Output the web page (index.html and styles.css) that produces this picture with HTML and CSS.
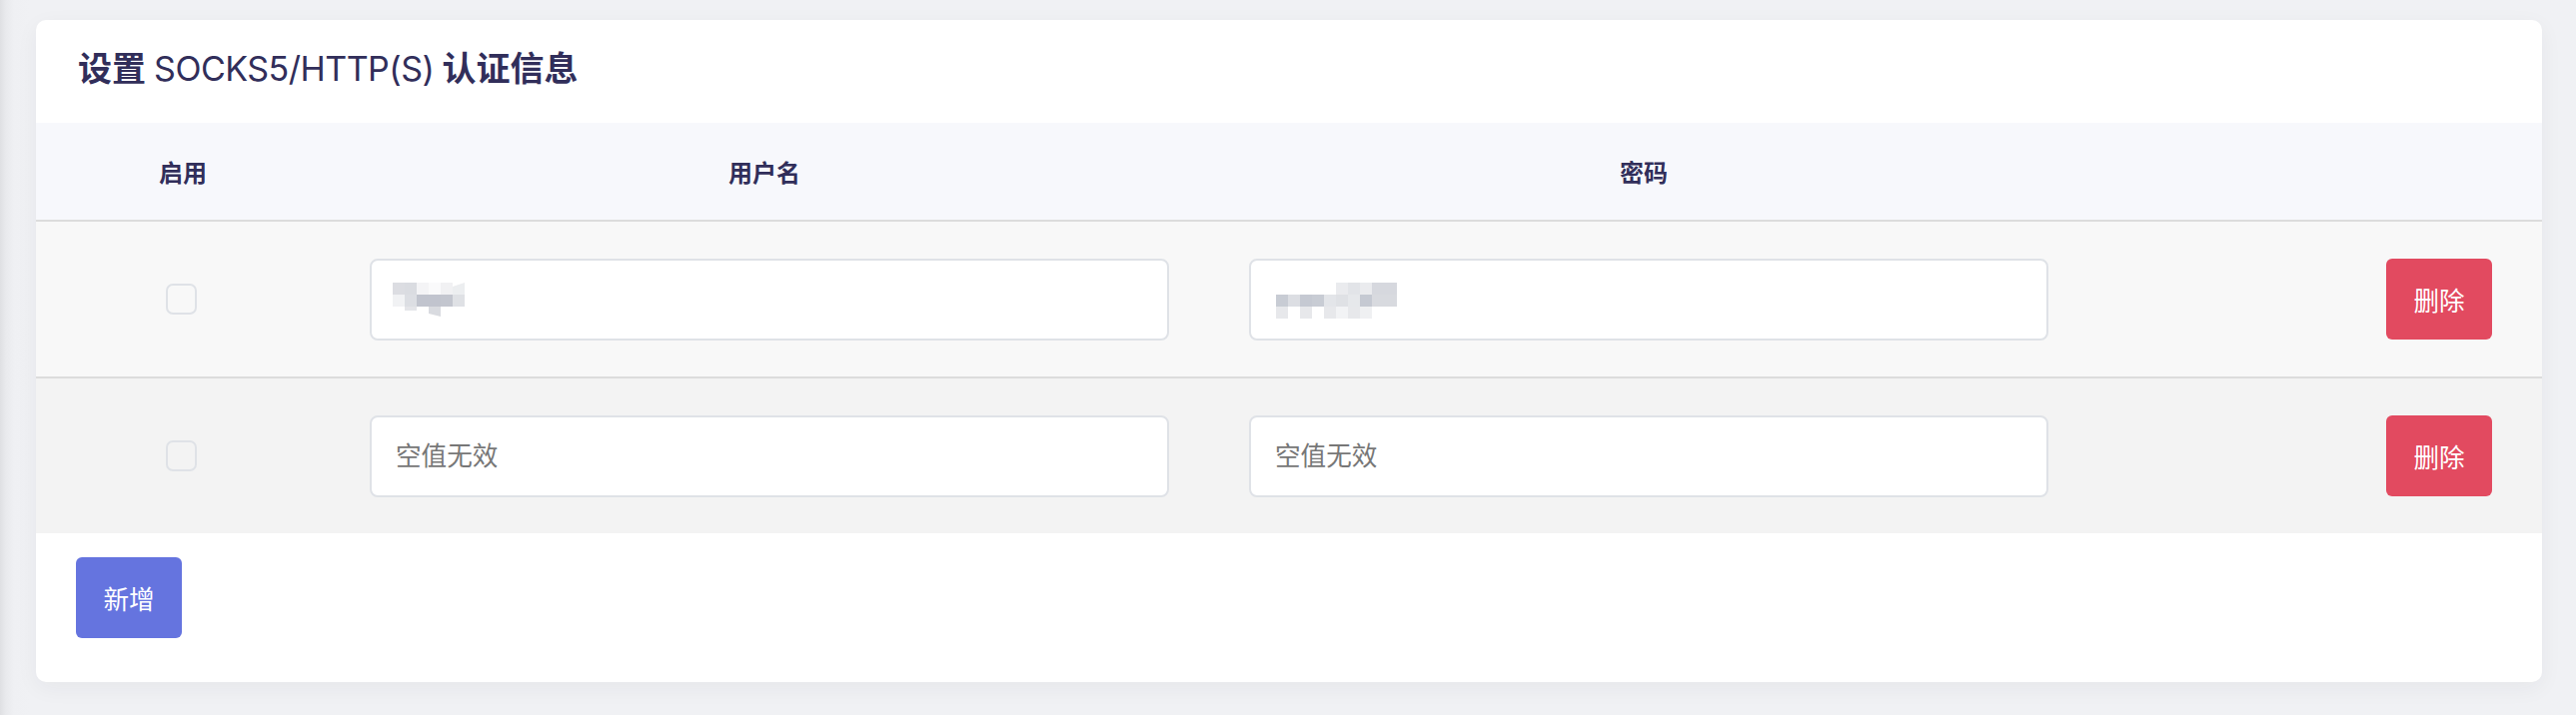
FILE: index.html
```html
<!DOCTYPE html>
<html lang="zh-CN">
<head>
<meta charset="utf-8">
<title>设置 SOCKS5/HTTP(S) 认证信息</title>
<link rel="stylesheet" href="styles.css">
</head>
<body>
<div class="page">
  <section class="card">
    <h2 class="card-title">设置 <span class="latin">SOCKS5/HTTP(S)</span> 认证信息</h2>
    <div class="table">
      <div class="row head">
        <div class="cell">启用</div>
        <div class="cell">用户名</div>
        <div class="cell">密码</div>
        <div class="cell"></div>
      </div>
      <div class="row body odd">
        <div class="cell"><input type="checkbox" class="check"></div>
        <div class="cell field-cell">
          <div class="field">
            <input type="text" class="text-input" aria-label="用户名">
            <svg class="mosaic mosaic-user" width="72" height="36" viewBox="0 0 72 36" aria-hidden="true">
              <rect x="0" y="0" width="12" height="12" fill="#dcdde2"/>
              <rect x="12" y="0" width="12" height="12" fill="#dadce1"/>
              <rect x="24" y="0" width="12" height="12" fill="#f4f4f6"/>
              <rect x="36" y="0" width="12" height="12" fill="#fafafb"/>
              <rect x="48" y="0" width="12" height="12" fill="#f1f1f3"/>
              <polygon points="60,4 72,0 72,12 60,12" fill="#eceef0"/>
              <rect x="0" y="12" width="12" height="12" fill="#f1f2f4"/>
              <rect x="12" y="12" width="12" height="12" fill="#dcdee3"/>
              <rect x="24" y="12" width="12" height="12" fill="#c1c4ce"/>
              <rect x="36" y="12" width="12" height="12" fill="#c1c4ce"/>
              <rect x="48" y="12" width="12" height="12" fill="#c3c6cf"/>
              <rect x="60" y="12" width="12" height="12" fill="#dfe1e5"/>
              <rect x="12" y="24" width="12" height="4" fill="#e4e5e9"/>
              <polygon points="36,24 48,24 48,34 36,31" fill="#d9dbe0"/>
            </svg>
          </div>
        </div>
        <div class="cell field-cell">
          <div class="field">
            <input type="password" class="text-input" aria-label="密码">
            <svg class="mosaic mosaic-pass" width="121" height="36" viewBox="0 0 121 36" aria-hidden="true">
              <rect x="60" y="0" width="12" height="12" fill="#eaebee"/>
              <rect x="72" y="0" width="12" height="12" fill="#e2e4e8"/>
              <rect x="84" y="0" width="12" height="12" fill="#eaebee"/>
              <rect x="96" y="0" width="25" height="12" fill="#d6d8de"/>
              <rect x="0" y="12" width="12" height="12" fill="#c8ccd4"/>
              <rect x="12" y="12" width="12" height="12" fill="#dcdee3"/>
              <rect x="24" y="12" width="12" height="12" fill="#c5c9d2"/>
              <rect x="36" y="12" width="12" height="12" fill="#c8ccd4"/>
              <rect x="48" y="12" width="12" height="12" fill="#e3e5e9"/>
              <rect x="60" y="12" width="12" height="12" fill="#dfe1e5"/>
              <rect x="72" y="12" width="12" height="12" fill="#e6e8eb"/>
              <rect x="84" y="12" width="12" height="12" fill="#c5c9d2"/>
              <rect x="96" y="12" width="25" height="12" fill="#d8dadf"/>
              <rect x="0" y="24" width="12" height="12" fill="#e7e8eb"/>
              <rect x="24" y="24" width="12" height="12" fill="#e7e8eb"/>
              <rect x="48" y="24" width="12" height="12" fill="#e7e8eb"/>
              <rect x="60" y="24" width="12" height="12" fill="#f2f3f5"/>
              <rect x="72" y="24" width="12" height="12" fill="#e7e8eb"/>
              <rect x="84" y="24" width="12" height="12" fill="#eff0f2"/>
            </svg>
          </div>
        </div>
        <div class="cell action-cell"><button class="btn btn-danger" type="button">删除</button></div>
      </div>
      <div class="row body even">
        <div class="cell"><input type="checkbox" class="check"></div>
        <div class="cell field-cell">
          <div class="field"><input type="text" class="text-input" placeholder="空值无效"></div>
        </div>
        <div class="cell field-cell">
          <div class="field"><input type="text" class="text-input" placeholder="空值无效"></div>
        </div>
        <div class="cell action-cell"><button class="btn btn-danger" type="button">删除</button></div>
      </div>
    </div>
    <div class="card-footer">
      <button class="btn btn-primary" type="button">新增</button>
    </div>
  </section>
</div>
</body>
</html>
```

FILE: styles.css
```css
* {
  box-sizing: border-box;
}

html, body {
  margin: 0;
  height: 100%;
}

body {
  font-family: Inter, "Noto Sans CJK SC", sans-serif;
  background: linear-gradient(to right, #dfe0e3 0px, #e9eaed 6px, #eff0f3 14px, #f0f1f4 30px);
  color: #312e5a;
}

.page {
  padding: 20px 34px 33px 36px;
}

.card {
  background: #ffffff;
  border-radius: 10px;
  box-shadow: 0 6px 22px rgba(30, 35, 60, 0.05);
  overflow: hidden;
  padding-bottom: 44px;
}

.card-title {
  margin: 0;
  height: 103px;
  display: flex;
  align-items: center;
  padding: 0 40px 4px 42px;
  font-size: 34px;
  font-weight: 700;
  color: #312e5a;
  line-height: 1.2;
  white-space: pre;
}

.card-title .latin {
  font-weight: 400;
  letter-spacing: -0.5px;
}

.row {
  display: grid;
  grid-template-columns: 294px 880px 880px 1fr;
  align-items: center;
}

.row.head {
  height: 99px;
  background: #f7f8fc;
  border-bottom: 2px solid #dcdcdc;
  font-size: 24px;
  font-weight: 700;
  color: #312e5a;
}

.row.head .cell {
  display: block;
  text-align: center;
  padding-right: 10px;
}

.row.head .cell:first-child {
  padding-right: 0;
}

.row.body {
  height: 157px;
}

.row.odd {
  background: #f8f8f8;
  border-bottom: 2px solid #dcdcdc;
}

.row.even {
  background: #f3f3f3;
  height: 155px;
}

.cell {
  display: flex;
  align-items: center;
  justify-content: center;
}

.field-cell {
  padding: 0 40px;
}

.field {
  position: relative;
  width: 100%;
}

.text-input {
  display: block;
  width: 100%;
  height: 82px;
  border: 2px solid #dfe2e7;
  border-radius: 8px;
  background: #ffffff;
  padding: 0 24px;
  font-family: Inter, "Noto Sans CJK SC", sans-serif;
  font-size: 25.6px;
  color: #495057;
  outline: none;
}

.text-input::placeholder {
  color: #777777;
}

.mosaic {
  position: absolute;
  top: 24px;
  display: block;
}

.mosaic-user {
  left: 23px;
}

.mosaic-pass {
  left: 27px;
}

.check {
  appearance: none;
  -webkit-appearance: none;
  width: 31px;
  height: 31px;
  margin: 0 0 0 -3px;
  border: 2px solid #dfe2e7;
  border-radius: 7px;
  background: transparent;
}

.action-cell {
  justify-content: flex-end;
  padding-right: 50px;
}

.btn {
  border: none;
  border-radius: 6px;
  height: 81px;
  width: 106px;
  font-family: Inter, "Noto Sans CJK SC", sans-serif;
  font-size: 25.6px;
  color: #ffffff;
  padding: 0;
  cursor: pointer;
}

.btn-danger {
  background: #e24a60;
}

.btn-primary {
  background: #6574df;
}

.card-footer {
  padding: 24px 40px 0 40px;
}
```
